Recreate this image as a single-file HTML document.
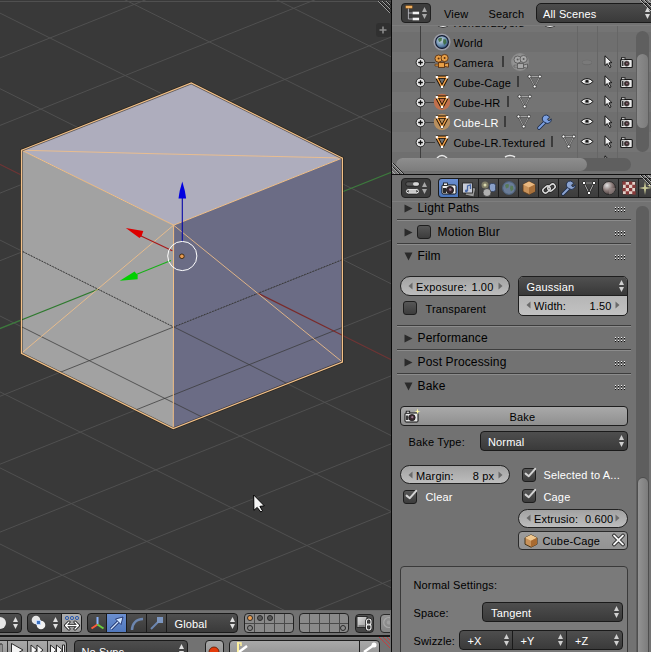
<!DOCTYPE html>
<html><head><meta charset="utf-8">
<style>
*{box-sizing:border-box}
html,body{margin:0;padding:0}
body{width:651px;height:652px;overflow:hidden;position:relative;background:#727272;font-family:"Liberation Sans",sans-serif;font-size:11px;color:#000}
.a{position:absolute}
.t{position:absolute;white-space:nowrap;line-height:1;letter-spacing:0.15px}
.menu{position:absolute;border:1px solid #1a1a1a;border-radius:4px;background:linear-gradient(#4e4e4e,#3a3a3a);color:#fff}
.btn{position:absolute;border:1px solid #1e1e1e;border-radius:4px;background:linear-gradient(#a9a9a9,#8f8f8f)}
.num{position:absolute;border:1px solid #222;border-radius:10px;background:linear-gradient(#a2a2a2,#bdbdbd)}
.chk{position:absolute;width:14px;height:14px;border:1px solid #1e1e1e;border-radius:3px;background:linear-gradient(#575757,#3c3c3c)}
.sep{position:absolute;height:1px;background:#4f4f4f;box-shadow:0 1px 0 #7f7f7f}
.ph{position:absolute;font-size:12px;line-height:1;white-space:nowrap}
.tri{position:absolute;width:0;height:0}
</style></head><body>

<svg width="391" height="610" viewBox="0 0 391 610" style="position:absolute;left:0;top:0;display:block">
<defs>
<clipPath id="outcube"><path clip-rule="evenodd" d="M-5 -5H400V620H-5Z M21.5 150.2 191.3 83.0 342.4 158.0 342.5 259.5 173.7 326.9 22.9 251.6Z"/></clipPath>
<clipPath id="lowcube"><polygon points="22.9,251.6 173.7,326.9 342.5,259.5 342.4,362.0 173.3,428.6 21.4,353.3"/></clipPath>
</defs>
<rect x="0" y="0" width="391" height="610" fill="#393939"/>
<rect x="0" y="1" width="391" height="1" fill="#505050"/>
<g clip-path="url(#outcube)"><path d="M-2.0 543.0L135.6 612.0 M-2.0 466.9L287.7 612.0 M-2.0 390.9L393.0 588.6 M-2.0 315.0L393.0 512.5 M-2.0 239.1L393.0 436.5 M-2.0 87.7L393.0 284.7 M-2.0 12.1L393.0 209.0 M121.3 -2.0L393.0 133.3 M273.0 -2.0L393.0 57.7 M-2.0 58.7L150.2 -2.0 M-2.0 126.2L319.5 -2.0 M-2.0 193.9L393.0 36.3 M-2.0 261.5L393.0 103.9 M-2.0 397.1L393.0 239.4 M-2.0 465.0L393.0 307.2 M-2.0 532.9L393.0 375.1 M-2.0 600.9L393.0 443.1 M140.5 612.0L393.0 511.1 M311.0 612.0L393.0 579.2" stroke="#505050" stroke-width="1" fill="none"/>
<path d="M-2.0 163.4L393.0 360.6" stroke="#6e3535" stroke-width="1.2" fill="none"/>
<path d="M-2.0 329.3L393.0 171.6" stroke="#3d7a3d" stroke-width="1.2" fill="none"/></g>
<polygon points="21.5,150.2 191.3,83.0 342.4,158.0 173.6,225.2" fill="#aeadbd"/>
<polygon points="21.5,150.2 173.6,225.2 173.3,428.6 21.4,353.3" fill="#a2a2a2"/>
<polygon points="173.6,225.2 342.4,158.0 342.4,362.0 173.3,428.6" fill="#6b6c85"/>
<g clip-path="url(#lowcube)"><path d="M-2.0 543.0L135.6 612.0 M-2.0 466.9L287.7 612.0 M-2.0 390.9L393.0 588.6 M-2.0 315.0L393.0 512.5 M-2.0 239.1L393.0 436.5 M-2.0 87.7L393.0 284.7 M-2.0 12.1L393.0 209.0 M121.3 -2.0L393.0 133.3 M273.0 -2.0L393.0 57.7 M-2.0 58.7L150.2 -2.0 M-2.0 126.2L319.5 -2.0 M-2.0 193.9L393.0 36.3 M-2.0 261.5L393.0 103.9 M-2.0 397.1L393.0 239.4 M-2.0 465.0L393.0 307.2 M-2.0 532.9L393.0 375.1 M-2.0 600.9L393.0 443.1 M140.5 612.0L393.0 511.1 M311.0 612.0L393.0 579.2" stroke="#3a3a3a" stroke-opacity="0.75" stroke-width="1" fill="none"/>
<path d="M-2.0 163.4L393.0 360.6" stroke="#7a2a2a" stroke-width="1.2" fill="none"/>
<path d="M-2.0 329.3L393.0 171.6" stroke="#2f7a2f" stroke-width="1.2" fill="none"/></g>
<polyline points="22.9,251.6 173.7,326.9 342.5,259.5" stroke="#3a3a3a" stroke-width="1" stroke-dasharray="1.5 1.5" fill="none"/>
<g stroke="#f2c088" stroke-width="1" fill="none" stroke-linejoin="round">
<polyline points="21.5,150.2 150.0,153.6 342.4,158.0" stroke-opacity="0.85"/>
<polyline points="21.4,353.3 173.6,225.2 342.4,362.0" stroke-opacity="0.85"/>
<polyline points="21.5,150.2 173.6,225.2 342.4,158.0"/>
<polyline points="173.6,225.2 173.3,428.6"/>
</g>
<polygon points="21.5,150.2 191.3,83.0 342.4,158.0 342.4,362.0 173.3,428.6 21.4,353.3" stroke="#1a1208" stroke-width="2.6" fill="none" stroke-opacity="0.55" stroke-linejoin="miter"/>
<polygon points="21.5,150.2 191.3,83.0 342.4,158.0 342.4,362.0 173.3,428.6 21.4,353.3" stroke="#f2c088" stroke-width="1.2" fill="none" stroke-linejoin="miter"/>
<line x1="182.3" y1="241.5" x2="182.3" y2="197" stroke="#0808a8" stroke-width="1.1"/>
<polygon points="182.3,181.5 179.70000000000002,191 178.5,198.5 186.10000000000002,198.5 184.9,191" fill="#0000e0"/>
<line x1="172.3" y1="250.8" x2="140" y2="235.6" stroke="#a81818" stroke-width="1.1"/>
<polygon points="125.8,228.1 143.3,231.0 141.6,236.0 139.5,238.1" fill="#dd0000"/>
<line x1="170.9" y1="260.5" x2="135" y2="275" stroke="#18b018" stroke-width="1.1"/>
<polygon points="119.8,280.8 134.6,271.6 137.6,275.2 137.6,279.2" fill="#00d000"/>
<circle cx="182.3" cy="256.0" r="14.6" stroke="#ffffff" stroke-width="1" fill="none"/>
<circle cx="181.9" cy="256.3" r="2.3" fill="#e89a50" stroke="#3a2408" stroke-width="0.9"/>
<g stroke="#a0a0a0" stroke-width="1"><line x1="378" y1="1" x2="390" y2="13"/><line x1="382" y1="1" x2="390" y2="9"/><line x1="386" y1="1" x2="390" y2="5"/></g>
<g stroke="#1c1c1c" stroke-width="1"><line x1="379" y1="1" x2="391" y2="13"/><line x1="383" y1="1" x2="391" y2="9"/><line x1="387" y1="1" x2="391" y2="5"/></g>
<rect x="376" y="23" width="15" height="14" rx="3" fill="#2e2e2e" fill-opacity="0.8"/>
<path d="M383 26.5v7M379.5 30h7" stroke="#8a8a8a" stroke-width="1.6"/>
<path d="M253.7 495 L253.9 510.3 L257.2 507.4 L260.8 512 L262.6 510.9 L259.9 506.4 L264.3 505.8 Z" fill="#f4f4f4" stroke="#000" stroke-width="1"/>
</svg>
<div class="a" style="left:391px;top:0;width:1px;height:652px;background:#0a0a0a"></div>
<div class="a" style="left:392px;top:0;width:259px;height:174px;background:#727272;overflow:hidden">
<div class="a" style="left:0;top:12px;width:259px;height:20px;background:#747474"></div>
<div class="a" style="left:0;top:32px;width:259px;height:20px;background:#6f6f6f"></div>
<div class="a" style="left:0;top:52px;width:259px;height:20px;background:#747474"></div>
<div class="a" style="left:0;top:72px;width:259px;height:20px;background:#6f6f6f"></div>
<div class="a" style="left:0;top:92px;width:259px;height:20px;background:#747474"></div>
<div class="a" style="left:0;top:112px;width:259px;height:20px;background:#6f6f6f"></div>
<div class="a" style="left:0;top:132px;width:259px;height:20px;background:#747474"></div>
<div class="a" style="left:0;top:152px;width:259px;height:20px;background:#6f6f6f"></div>
<div class="a" style="left:184.5px;top:25px;width:1px;height:135px;background:#666"></div>
<div class="a" style="left:204.5px;top:25px;width:1px;height:135px;background:#666"></div>
<div class="a" style="left:224.5px;top:25px;width:1px;height:135px;background:#666"></div>
<div class="a" style="left:27.5px;top:25px;width:1px;height:133px;background:#3e3e3e"></div>
<div class="t" style="left:61.5px;top:17.69px;font-size:11px;color:#000;">RenderLayers</div>
<div class="t" style="left:61.5px;top:37.69px;font-size:11px;color:#000;">World</div>
<svg class="a" style="left:22.5px;top:56.5px;overflow:visible" width="11" height="11" viewBox="0 0 11 11"><circle cx="5.5" cy="5.5" r="4.4" fill="#e6e6e6" stroke="#262626" stroke-width="1"/><path d="M3.2 5.5h4.6M5.5 3.2v4.6" stroke="#111" stroke-width="1.3"/></svg>
<div class="a" style="left:33px;top:62px;width:10px;height:1px;background:#3e3e3e"></div>
<div class="t" style="left:61.5px;top:57.69px;font-size:11px;color:#000;">Camera</div>
<div class="a" style="left:110.2px;top:56px;width:2px;height:11px;background:#3c3c3c"></div>
<svg class="a" style="left:22.5px;top:76.5px;overflow:visible" width="11" height="11" viewBox="0 0 11 11"><circle cx="5.5" cy="5.5" r="4.4" fill="#e6e6e6" stroke="#262626" stroke-width="1"/><path d="M3.2 5.5h4.6M5.5 3.2v4.6" stroke="#111" stroke-width="1.3"/></svg>
<div class="a" style="left:33px;top:82px;width:10px;height:1px;background:#3e3e3e"></div>
<div class="t" style="left:61.5px;top:77.69px;font-size:11px;color:#000;">Cube-Cage</div>
<div class="a" style="left:124.7px;top:76px;width:2px;height:11px;background:#3c3c3c"></div>
<svg class="a" style="left:22.5px;top:96.5px;overflow:visible" width="11" height="11" viewBox="0 0 11 11"><circle cx="5.5" cy="5.5" r="4.4" fill="#e6e6e6" stroke="#262626" stroke-width="1"/><path d="M3.2 5.5h4.6M5.5 3.2v4.6" stroke="#111" stroke-width="1.3"/></svg>
<div class="a" style="left:33px;top:102px;width:10px;height:1px;background:#3e3e3e"></div>
<div class="t" style="left:61.5px;top:97.69px;font-size:11px;color:#000;">Cube-HR</div>
<div class="a" style="left:114.6px;top:96px;width:2px;height:11px;background:#3c3c3c"></div>
<svg class="a" style="left:22.5px;top:116.5px;overflow:visible" width="11" height="11" viewBox="0 0 11 11"><circle cx="5.5" cy="5.5" r="4.4" fill="#e6e6e6" stroke="#262626" stroke-width="1"/><path d="M3.2 5.5h4.6M5.5 3.2v4.6" stroke="#111" stroke-width="1.3"/></svg>
<div class="a" style="left:33px;top:122px;width:10px;height:1px;background:#3e3e3e"></div>
<div class="t" style="left:61.5px;top:117.69px;font-size:11px;color:#fff;">Cube-LR</div>
<div class="a" style="left:112.4px;top:116px;width:2px;height:11px;background:#3c3c3c"></div>
<svg class="a" style="left:22.5px;top:136.5px;overflow:visible" width="11" height="11" viewBox="0 0 11 11"><circle cx="5.5" cy="5.5" r="4.4" fill="#e6e6e6" stroke="#262626" stroke-width="1"/><path d="M3.2 5.5h4.6M5.5 3.2v4.6" stroke="#111" stroke-width="1.3"/></svg>
<div class="a" style="left:33px;top:142px;width:10px;height:1px;background:#3e3e3e"></div>
<div class="t" style="left:61.5px;top:137.69px;font-size:11px;color:#000;">Cube-LR.Textured</div>
<div class="a" style="left:158.7px;top:136px;width:2px;height:11px;background:#3c3c3c"></div>
<svg class="a" style="left:44px;top:20px;overflow:visible" width="14" height="10" viewBox="0 0 14 10"><path d="M1 4 Q7 9 13 4" stroke="#222" stroke-width="2.6" fill="none"/><path d="M1 4 Q7 9 13 4" stroke="#f0f0f0" stroke-width="1.2" fill="none"/></svg>
<svg class="a" style="left:151px;top:20px;overflow:visible" width="14" height="10" viewBox="0 0 14 10"><path d="M1 4 Q7 9 13 4" stroke="#222" stroke-width="2.6" fill="none"/><path d="M1 4 Q7 9 13 4" stroke="#f0f0f0" stroke-width="1.2" fill="none"/></svg>
<svg class="a" style="left:44px;top:152px;overflow:visible" width="12" height="8" viewBox="0 0 12 8"><path d="M1 6 Q6 1 11 6" stroke="#e8e8e8" stroke-width="1.5" fill="none"/></svg>
<svg class="a" style="left:112px;top:152px;overflow:visible" width="12" height="8" viewBox="0 0 12 8"><path d="M1 5 Q6 2 11 5" stroke="#e8e8e8" stroke-width="1.5" fill="none"/></svg>
<svg class="a" style="left:41px;top:32.7px;overflow:visible" width="18" height="18" viewBox="0 0 18 18"><circle cx="9" cy="9" r="8.6" fill="#a9aab6" opacity="0.8"/><defs><radialGradient id="gg" cx="0.4" cy="0.35" r="0.7"><stop offset="0" stop-color="#d0dce4"/><stop offset="0.6" stop-color="#6a8eb0"/><stop offset="1" stop-color="#2e4a70"/></radialGradient></defs><circle cx="9" cy="9" r="6.4" fill="url(#gg)" stroke="#10182e" stroke-width="1.1"/><path d="M5 6 Q7 4 9 5 L8.5 8 L6 9 Z M10.5 6 L13 6.5 L13.5 10 L11 12 L10 9Z" fill="#3a6a3a" opacity="0.85"/></svg>
<svg class="a" style="left:42.2px;top:54.3px;overflow:visible" width="16" height="15" viewBox="0 0 16 15"><circle cx="4.6" cy="4.6" r="3.6" fill="#e8a048" stroke="#5a3010" stroke-width="0.9"/><circle cx="4.6" cy="4.6" r="1" fill="#5a3010"/><circle cx="10.6" cy="4" r="3.6" fill="#e8a048" stroke="#5a3010" stroke-width="0.9"/><circle cx="10.6" cy="4" r="1" fill="#5a3010"/><rect x="4.5" y="8.6" width="6" height="4.8" fill="#e8a048" stroke="#5a3010" stroke-width="0.9"/><path d="M1 10.2 L4.5 10.2 L4.5 12 L1 12Z" fill="#e8a048" stroke="#5a3010" stroke-width="0.7"/><path d="M10.5 10 L14.5 9 L14.5 13.2 L10.5 12.4Z" fill="#e8a048" stroke="#5a3010" stroke-width="0.9"/></svg>
<svg class="a" style="left:42.2px;top:74.2px;overflow:visible" width="16" height="16" viewBox="0 0 16 16"><polygon points="2.7,3.2 13.3,3.2 8,13" fill="none" stroke="#1a0e00" stroke-width="3.2" stroke-linejoin="round"/><polygon points="2.7,3.2 13.3,3.2 8,13" fill="none" stroke="#f0a04a" stroke-width="1.5" stroke-linejoin="round"/><rect x="1.5000000000000002" y="2.0" width="2.4" height="2.4" fill="#fff"/><rect x="12.100000000000001" y="2.0" width="2.4" height="2.4" fill="#fff"/><rect x="6.8" y="11.8" width="2.4" height="2.4" fill="#fff"/></svg>
<svg class="a" style="left:42.2px;top:94.2px;overflow:visible" width="16" height="16" viewBox="0 0 16 16"><circle cx="8" cy="8" r="8.2" fill="#c0704c"/><polygon points="2.7,3.2 13.3,3.2 8,13" fill="none" stroke="#1a0e00" stroke-width="3.2" stroke-linejoin="round"/><polygon points="2.7,3.2 13.3,3.2 8,13" fill="none" stroke="#f0a04a" stroke-width="1.5" stroke-linejoin="round"/><rect x="1.5000000000000002" y="2.0" width="2.4" height="2.4" fill="#fff"/><rect x="12.100000000000001" y="2.0" width="2.4" height="2.4" fill="#fff"/><rect x="6.8" y="11.8" width="2.4" height="2.4" fill="#fff"/></svg>
<svg class="a" style="left:42.2px;top:114.2px;overflow:visible" width="16" height="16" viewBox="0 0 16 16"><circle cx="8" cy="8" r="8.2" fill="#b88f5e"/><polygon points="2.7,3.2 13.3,3.2 8,13" fill="none" stroke="#1a0e00" stroke-width="3.2" stroke-linejoin="round"/><polygon points="2.7,3.2 13.3,3.2 8,13" fill="none" stroke="#f0a04a" stroke-width="1.5" stroke-linejoin="round"/><rect x="1.5000000000000002" y="2.0" width="2.4" height="2.4" fill="#fff"/><rect x="12.100000000000001" y="2.0" width="2.4" height="2.4" fill="#fff"/><rect x="6.8" y="11.8" width="2.4" height="2.4" fill="#fff"/></svg>
<svg class="a" style="left:42.2px;top:134.2px;overflow:visible" width="16" height="16" viewBox="0 0 16 16"><polygon points="2.7,3.2 13.3,3.2 8,13" fill="none" stroke="#1a0e00" stroke-width="3.2" stroke-linejoin="round"/><polygon points="2.7,3.2 13.3,3.2 8,13" fill="none" stroke="#f0a04a" stroke-width="1.5" stroke-linejoin="round"/><rect x="1.5000000000000002" y="2.0" width="2.4" height="2.4" fill="#fff"/><rect x="12.100000000000001" y="2.0" width="2.4" height="2.4" fill="#fff"/><rect x="6.8" y="11.8" width="2.4" height="2.4" fill="#fff"/></svg>
<svg class="a" style="left:119px;top:52.5px;overflow:visible" width="18" height="18" viewBox="0 0 18 18"><circle cx="9" cy="9" r="9" fill="#8c8c8c"/><circle cx="9" cy="9" r="7.5" fill="#939393"/></svg>
<svg class="a" style="left:120.5px;top:54.5px;overflow:visible" width="16" height="15" viewBox="0 0 16 15"><circle cx="4.6" cy="4.6" r="3.6" fill="#a8a8a8" stroke="#5a5a5a" stroke-width="0.9"/><circle cx="4.6" cy="4.6" r="1" fill="#5a5a5a"/><circle cx="10.6" cy="4" r="3.6" fill="#a8a8a8" stroke="#5a5a5a" stroke-width="0.9"/><circle cx="10.6" cy="4" r="1" fill="#5a5a5a"/><rect x="4.5" y="8.6" width="6" height="4.8" fill="#a8a8a8" stroke="#5a5a5a" stroke-width="0.9"/><path d="M1 10.2 L4.5 10.2 L4.5 12 L1 12Z" fill="#a8a8a8" stroke="#5a5a5a" stroke-width="0.7"/><path d="M10.5 10 L14.5 9 L14.5 13.2 L10.5 12.4Z" fill="#a8a8a8" stroke="#5a5a5a" stroke-width="0.9"/></svg>
<svg class="a" style="left:135.9px;top:75.2px;overflow:visible" width="14" height="14" viewBox="0 0 14 14"><polygon points="1.5,1.5 11.9,1.5 6.7,11.5" fill="none" stroke="#3a3a3a" stroke-width="1.6"/><polygon points="1.5,1.5 11.9,1.5 6.7,11.5" fill="none" stroke="#e8e8e8" stroke-width="0.6"/><circle cx="1.5" cy="1.5" r="1.5" fill="#fff" stroke="#222" stroke-width="0.7"/><circle cx="11.9" cy="1.5" r="1.5" fill="#fff" stroke="#222" stroke-width="0.7"/><circle cx="6.7" cy="11.5" r="1.5" fill="#fff" stroke="#222" stroke-width="0.7"/></svg>
<svg class="a" style="left:126.1px;top:95.3px;overflow:visible" width="14" height="14" viewBox="0 0 14 14"><polygon points="1.5,1.5 11.9,1.5 6.7,11.5" fill="none" stroke="#3a3a3a" stroke-width="1.6"/><polygon points="1.5,1.5 11.9,1.5 6.7,11.5" fill="none" stroke="#e8e8e8" stroke-width="0.6"/><circle cx="1.5" cy="1.5" r="1.5" fill="#fff" stroke="#222" stroke-width="0.7"/><circle cx="11.9" cy="1.5" r="1.5" fill="#fff" stroke="#222" stroke-width="0.7"/><circle cx="6.7" cy="11.5" r="1.5" fill="#fff" stroke="#222" stroke-width="0.7"/></svg>
<svg class="a" style="left:124.6px;top:115.3px;overflow:visible" width="14" height="14" viewBox="0 0 14 14"><polygon points="1.5,1.5 11.9,1.5 6.7,11.5" fill="none" stroke="#3a3a3a" stroke-width="1.6"/><polygon points="1.5,1.5 11.9,1.5 6.7,11.5" fill="none" stroke="#e8e8e8" stroke-width="0.6"/><circle cx="1.5" cy="1.5" r="1.5" fill="#fff" stroke="#222" stroke-width="0.7"/><circle cx="11.9" cy="1.5" r="1.5" fill="#fff" stroke="#222" stroke-width="0.7"/><circle cx="6.7" cy="11.5" r="1.5" fill="#fff" stroke="#222" stroke-width="0.7"/></svg>
<svg class="a" style="left:169.7px;top:135.3px;overflow:visible" width="14" height="14" viewBox="0 0 14 14"><polygon points="1.5,1.5 11.9,1.5 6.7,11.5" fill="none" stroke="#3a3a3a" stroke-width="1.6"/><polygon points="1.5,1.5 11.9,1.5 6.7,11.5" fill="none" stroke="#e8e8e8" stroke-width="0.6"/><circle cx="1.5" cy="1.5" r="1.5" fill="#fff" stroke="#222" stroke-width="0.7"/><circle cx="11.9" cy="1.5" r="1.5" fill="#fff" stroke="#222" stroke-width="0.7"/><circle cx="6.7" cy="11.5" r="1.5" fill="#fff" stroke="#222" stroke-width="0.7"/></svg>
<svg class="a" style="left:144.5px;top:114.5px;overflow:visible" width="15" height="15" viewBox="0 0 15 15"><path d="M2 13 L8.5 6.5" stroke="#1a2a4a" stroke-width="3.6" stroke-linecap="round"/><path d="M2 13 L8.5 6.5" stroke="#7ca0e0" stroke-width="2" stroke-linecap="round"/><path d="M8 7.5 A3.8 3.8 0 1 1 12.5 2.2 L10.6 4.2 L11.2 5.4 L12.4 5.8 L14.2 3.8 A3.8 3.8 0 0 1 8 7.5Z" fill="#7ca0e0" stroke="#1a2a4a" stroke-width="0.9"/></svg>
<svg class="a" style="left:188px;top:78.0px;overflow:visible" width="14" height="7" viewBox="0 0 14 7"><path d="M0.8 3.5 Q7 -2.5 13.2 3.5 Q7 9.5 0.8 3.5Z" fill="#f2f2f2" stroke="#1a1a1a" stroke-width="1"/><circle cx="7" cy="3.5" r="2.3" fill="#8a8a8a"/><circle cx="7" cy="3.2" r="1.2" fill="#111"/></svg>
<svg class="a" style="left:188px;top:98.0px;overflow:visible" width="14" height="7" viewBox="0 0 14 7"><path d="M0.8 3.5 Q7 -2.5 13.2 3.5 Q7 9.5 0.8 3.5Z" fill="#f2f2f2" stroke="#1a1a1a" stroke-width="1"/><circle cx="7" cy="3.5" r="2.3" fill="#8a8a8a"/><circle cx="7" cy="3.2" r="1.2" fill="#111"/></svg>
<svg class="a" style="left:188px;top:118.0px;overflow:visible" width="14" height="7" viewBox="0 0 14 7"><path d="M0.8 3.5 Q7 -2.5 13.2 3.5 Q7 9.5 0.8 3.5Z" fill="#f2f2f2" stroke="#1a1a1a" stroke-width="1"/><circle cx="7" cy="3.5" r="2.3" fill="#8a8a8a"/><circle cx="7" cy="3.2" r="1.2" fill="#111"/></svg>
<svg class="a" style="left:188px;top:138.0px;overflow:visible" width="14" height="7" viewBox="0 0 14 7"><path d="M0.8 3.5 Q7 -2.5 13.2 3.5 Q7 9.5 0.8 3.5Z" fill="#f2f2f2" stroke="#1a1a1a" stroke-width="1"/><circle cx="7" cy="3.5" r="2.3" fill="#8a8a8a"/><circle cx="7" cy="3.2" r="1.2" fill="#111"/></svg>
<svg class="a" style="left:188px;top:58px;overflow:visible" width="14" height="8" viewBox="0 0 14 8"><ellipse cx="7" cy="4.5" rx="5" ry="2.8" fill="#6a6a6a"/><ellipse cx="7" cy="4.2" rx="4.5" ry="2" fill="#7a7a7a"/></svg>
<svg class="a" style="left:211.5px;top:55.2px;overflow:visible" width="9" height="13" viewBox="0 0 9 13"><path d="M1 0.8 L1 10.5 L3.3 8.6 L5.6 12.6 L7 11.8 L4.9 7.9 L7.9 7.6 Z" fill="#f0f0f0" stroke="#111" stroke-width="1" stroke-linejoin="round"/></svg>
<svg class="a" style="left:228px;top:56.7px;overflow:visible" width="13" height="11" viewBox="0 0 13 11"><rect x="0.7" y="2.5" width="11.6" height="8" rx="1" fill="#e8e8e8" stroke="#1a1a1a" stroke-width="1.2"/><rect x="1.5" y="0.7" width="3.5" height="2" fill="#e8e8e8" stroke="#1a1a1a" stroke-width="0.9"/><circle cx="6.7" cy="6.6" r="2.6" fill="#3a2a2a" stroke="#555" stroke-width="0.6"/><circle cx="6.9" cy="6.4" r="0.9" fill="#8a6a7a"/><rect x="2" y="4" width="1.5" height="5" fill="#3a3a3a"/></svg>
<svg class="a" style="left:211.5px;top:75.2px;overflow:visible" width="9" height="13" viewBox="0 0 9 13"><path d="M1 0.8 L1 10.5 L3.3 8.6 L5.6 12.6 L7 11.8 L4.9 7.9 L7.9 7.6 Z" fill="#f0f0f0" stroke="#111" stroke-width="1" stroke-linejoin="round"/></svg>
<svg class="a" style="left:228px;top:76.7px;overflow:visible" width="13" height="11" viewBox="0 0 13 11"><rect x="0.7" y="2.5" width="11.6" height="8" rx="1" fill="#e8e8e8" stroke="#1a1a1a" stroke-width="1.2"/><rect x="1.5" y="0.7" width="3.5" height="2" fill="#e8e8e8" stroke="#1a1a1a" stroke-width="0.9"/><circle cx="6.7" cy="6.6" r="2.6" fill="#3a2a2a" stroke="#555" stroke-width="0.6"/><circle cx="6.9" cy="6.4" r="0.9" fill="#8a6a7a"/><rect x="2" y="4" width="1.5" height="5" fill="#3a3a3a"/></svg>
<svg class="a" style="left:211.5px;top:95.2px;overflow:visible" width="9" height="13" viewBox="0 0 9 13"><path d="M1 0.8 L1 10.5 L3.3 8.6 L5.6 12.6 L7 11.8 L4.9 7.9 L7.9 7.6 Z" fill="#f0f0f0" stroke="#111" stroke-width="1" stroke-linejoin="round"/></svg>
<svg class="a" style="left:228px;top:96.7px;overflow:visible" width="13" height="11" viewBox="0 0 13 11"><rect x="0.7" y="2.5" width="11.6" height="8" rx="1" fill="#e8e8e8" stroke="#1a1a1a" stroke-width="1.2"/><rect x="1.5" y="0.7" width="3.5" height="2" fill="#e8e8e8" stroke="#1a1a1a" stroke-width="0.9"/><circle cx="6.7" cy="6.6" r="2.6" fill="#3a2a2a" stroke="#555" stroke-width="0.6"/><circle cx="6.9" cy="6.4" r="0.9" fill="#8a6a7a"/><rect x="2" y="4" width="1.5" height="5" fill="#3a3a3a"/></svg>
<svg class="a" style="left:211.5px;top:115.2px;overflow:visible" width="9" height="13" viewBox="0 0 9 13"><path d="M1 0.8 L1 10.5 L3.3 8.6 L5.6 12.6 L7 11.8 L4.9 7.9 L7.9 7.6 Z" fill="#f0f0f0" stroke="#111" stroke-width="1" stroke-linejoin="round"/></svg>
<svg class="a" style="left:228px;top:116.7px;overflow:visible" width="13" height="11" viewBox="0 0 13 11"><rect x="0.7" y="2.5" width="11.6" height="8" rx="1" fill="#e8e8e8" stroke="#1a1a1a" stroke-width="1.2"/><rect x="1.5" y="0.7" width="3.5" height="2" fill="#e8e8e8" stroke="#1a1a1a" stroke-width="0.9"/><circle cx="6.7" cy="6.6" r="2.6" fill="#3a2a2a" stroke="#555" stroke-width="0.6"/><circle cx="6.9" cy="6.4" r="0.9" fill="#8a6a7a"/><rect x="2" y="4" width="1.5" height="5" fill="#3a3a3a"/></svg>
<svg class="a" style="left:211.5px;top:135.2px;overflow:visible" width="9" height="13" viewBox="0 0 9 13"><path d="M1 0.8 L1 10.5 L3.3 8.6 L5.6 12.6 L7 11.8 L4.9 7.9 L7.9 7.6 Z" fill="#f0f0f0" stroke="#111" stroke-width="1" stroke-linejoin="round"/></svg>
<svg class="a" style="left:228px;top:136.7px;overflow:visible" width="13" height="11" viewBox="0 0 13 11"><rect x="0.7" y="2.5" width="11.6" height="8" rx="1" fill="#e8e8e8" stroke="#1a1a1a" stroke-width="1.2"/><rect x="1.5" y="0.7" width="3.5" height="2" fill="#e8e8e8" stroke="#1a1a1a" stroke-width="0.9"/><circle cx="6.7" cy="6.6" r="2.6" fill="#3a2a2a" stroke="#555" stroke-width="0.6"/><circle cx="6.9" cy="6.4" r="0.9" fill="#8a6a7a"/><rect x="2" y="4" width="1.5" height="5" fill="#3a3a3a"/></svg>
<svg class="a" style="left:211.5px;top:155px;overflow:visible" width="9" height="13" viewBox="0 0 9 13"><path d="M1 0.8 L1 10.5 L3.3 8.6 L5.6 12.6 L7 11.8 L4.9 7.9 L7.9 7.6 Z" fill="#f0f0f0" stroke="#111" stroke-width="1" stroke-linejoin="round"/></svg>
<div class="a" style="left:244px;top:31px;width:13px;height:121px;border-radius:6.5px;background:#5f5f5f"></div>
<div class="a" style="left:245px;top:54px;width:11px;height:74px;border-radius:5.5px;background:linear-gradient(90deg,#8c8c8c,#7c7c7c)"></div>
<div class="a" style="left:4px;top:157.5px;width:235px;height:13px;border-radius:6.5px;background:#5f5f5f"></div>
<div class="a" style="left:4px;top:157.5px;width:191px;height:13px;border-radius:6.5px;background:linear-gradient(#8e8e8e,#7c7c7c)"></div>
<svg class="a" style="left:0px;top:162px;overflow:visible" width="13" height="12" viewBox="0 0 13 12"><g stroke="#a8a8a8" stroke-width="1"><line x1="0" y1="1" x2="11" y2="12"/><line x1="0" y1="5" x2="7" y2="12"/><line x1="0" y1="9" x2="3" y2="12"/></g><g stroke="#222" stroke-width="1"><line x1="1" y1="1" x2="12" y2="12"/><line x1="1" y1="5" x2="8" y2="12"/></g></svg>
</div>
<div class="a" style="left:392px;top:0;width:259px;height:25px;background:#727272"></div>
<div class="a" style="left:392px;top:25px;width:259px;height:1px;background:#7c7c7c"></div>
<div class="a" style="left:401px;top:3px;width:30px;height:20px;border-radius:4px;background:#3c3c3c;border:1px solid #202020"></div>
<svg class="a" style="left:405px;top:5px;overflow:visible" width="22" height="16" viewBox="0 0 22 16"><rect x="0.5" y="0.5" width="7" height="3" rx="1" fill="#f0b060" stroke="#6a4010" stroke-width="0.6"/><path d="M3.4 3.5V14" stroke="#c8c8d0" stroke-width="0.8"/><path d="M3.4 8h4M3.4 14h4" stroke="#c8c8d0" stroke-width="0.8"/><rect x="7.6" y="6.7" width="6.5" height="2.6" fill="#f4f4f4"/><rect x="7.6" y="12.7" width="6.5" height="2.6" fill="#f4f4f4"/></svg>
<svg class="a" style="left:422.0px;top:6.800000000000001px;overflow:visible" width="5" height="12" viewBox="0 0 5 12"><polygon points="2.5,0 5,5 0,5" fill="#a8a8a8"/><polygon points="0,7 5,7 2.5,12" fill="#a8a8a8"/></svg>
<div class="t" style="left:444px;top:8.69px;font-size:11px;color:#000;">View</div>
<div class="t" style="left:488.5px;top:8.69px;font-size:11px;color:#000;">Search</div>
<div class="a" style="left:536px;top:3px;width:125px;height:20px;border:1px solid #1a1a1a;border-radius:5px;background:linear-gradient(#4c4c4c,#3a3a3a)"></div>
<div class="t" style="left:543px;top:8.69px;font-size:11px;color:#fff;">All Scenes</div>
<svg class="a" style="left:645.0px;top:6.800000000000001px;overflow:visible" width="5" height="12" viewBox="0 0 5 12"><polygon points="2.5,0 5,5 0,5" fill="#d8d8d8"/><polygon points="0,7 5,7 2.5,12" fill="#d8d8d8"/></svg>
<svg class="a" style="left:639px;top:0px;overflow:visible" width="12" height="12" viewBox="0 0 12 12"><g stroke="#b0b0b0" stroke-width="1"><line x1="1" y1="0" x2="12" y2="11"/><line x1="5" y1="0" x2="12" y2="7"/><line x1="9" y1="0" x2="12" y2="3"/></g><g stroke="#1a1a1a" stroke-width="1"><line x1="2" y1="0" x2="12" y2="10"/><line x1="6" y1="0" x2="12" y2="6"/></g></svg>
<div class="a" style="left:392px;top:173.5px;width:259px;height:2px;background:#0e0e0e"></div>
<div class="a" style="left:392px;top:175px;width:259px;height:26px;background:#727272"></div><div class="a" style="left:392px;top:201px;width:259px;height:1px;background:#7e7e7e"></div>
<div class="a" style="left:401px;top:178px;width:30px;height:20px;border-radius:4px;background:#3c3c3c;border:1px solid #202020"></div>
<svg class="a" style="left:405px;top:181px;overflow:visible" width="16" height="14" viewBox="0 0 16 14"><rect x="0.7" y="0.8" width="13.6" height="4.4" rx="2.2" fill="#5a5a5a" stroke="#1a1a1a" stroke-width="0.8"/><rect x="8" y="1.2" width="6" height="3.6" rx="1.8" fill="#d8d8d8"/><rect x="0.7" y="7.6" width="13.6" height="5.4" rx="2.7" fill="#f4f4f4" stroke="#1a1a1a" stroke-width="0.8"/><rect x="4" y="8.8" width="7" height="3" fill="#c8c8c8"/><polygon points="1.8,10.3 3.6,8.8 3.6,11.8" fill="#111"/><polygon points="13.2,10.3 11.4,8.8 11.4,11.8" fill="#111"/></svg>
<svg class="a" style="left:422.0px;top:181.8px;overflow:visible" width="5" height="12" viewBox="0 0 5 12"><polygon points="2.5,0 5,5 0,5" fill="#a8a8a8"/><polygon points="0,7 5,7 2.5,12" fill="#a8a8a8"/></svg>
<div class="a" style="left:438px;top:178px;width:220px;height:20px;border-radius:4px 0 0 4px;background:#1c1c1c"></div>
<div class="a" style="left:439px;top:179px;width:19px;height:18px;background:linear-gradient(#6b8fd0,#4a74b8);border-radius:3px 0 0 3px;"></div>
<div class="a" style="left:459px;top:179px;width:19px;height:18px;background:linear-gradient(#4c4c4c,#3c3c3c);"></div>
<div class="a" style="left:479px;top:179px;width:19px;height:18px;background:linear-gradient(#4c4c4c,#3c3c3c);"></div>
<div class="a" style="left:499px;top:179px;width:19px;height:18px;background:linear-gradient(#4c4c4c,#3c3c3c);"></div>
<div class="a" style="left:519px;top:179px;width:19px;height:18px;background:linear-gradient(#4c4c4c,#3c3c3c);"></div>
<div class="a" style="left:539px;top:179px;width:19px;height:18px;background:linear-gradient(#4c4c4c,#3c3c3c);"></div>
<div class="a" style="left:559px;top:179px;width:19px;height:18px;background:linear-gradient(#4c4c4c,#3c3c3c);"></div>
<div class="a" style="left:579px;top:179px;width:19px;height:18px;background:linear-gradient(#4c4c4c,#3c3c3c);"></div>
<div class="a" style="left:599px;top:179px;width:19px;height:18px;background:linear-gradient(#4c4c4c,#3c3c3c);"></div>
<div class="a" style="left:619px;top:179px;width:19px;height:18px;background:linear-gradient(#4c4c4c,#3c3c3c);"></div>
<div class="a" style="left:639px;top:179px;width:19px;height:18px;background:linear-gradient(#4c4c4c,#3c3c3c);"></div>
<svg class="a" style="left:440.5px;top:180.5px;overflow:visible" width="16" height="15" viewBox="0 0 16 15"><rect x="1" y="4" width="14" height="9" rx="1.2" fill="#f0f0f0" stroke="#111" stroke-width="1"/><rect x="2.5" y="2" width="4" height="2.5" fill="#f0f0f0" stroke="#111" stroke-width="0.8"/><circle cx="9" cy="9" r="3.6" fill="#3a2830" stroke="#111" stroke-width="0.8"/><circle cx="9.3" cy="8.6" r="1.3" fill="#a07a90"/><rect x="2" y="7" width="3" height="5" fill="#2a2a2a"/></svg><svg class="a" style="left:461px;top:180.5px;overflow:visible" width="16" height="16" viewBox="0 0 16 16"><rect x="5" y="6" width="9" height="9" fill="#9a9a9a" stroke="#2a2a2a" stroke-width="0.8" transform="rotate(12 9 10)"/><rect x="1.5" y="2" width="10" height="10" fill="#c8ccd8" stroke="#2a2a2a" stroke-width="0.9"/><path d="M6.5 10V5l3-1v4" stroke="#4a6aa8" stroke-width="1.3" fill="none"/><circle cx="5.3" cy="10" r="1.4" fill="#4a6aa8"/></svg><svg class="a" style="left:481px;top:180.5px;overflow:visible" width="16" height="16" viewBox="0 0 16 16"><circle cx="4" cy="4" r="3.5" fill="#e8e0a0" opacity="0.35"/><circle cx="4" cy="4" r="1.5" fill="#f0f0c0" opacity="0.8"/><rect x="8.5" y="2.5" width="6" height="8" rx="2" fill="#8aa0c8" stroke="#2a3a5a" stroke-width="0.7"/><circle cx="6" cy="11.5" r="4" fill="#b0b0b0" stroke="#3a3a3a" stroke-width="0.7"/></svg><svg class="a" style="left:500.5px;top:180px;overflow:visible" width="16" height="16" viewBox="0 0 16 16"><circle cx="8" cy="8" r="6.5" fill="#6a7c98" stroke="#1a2a40" stroke-width="1"/><path d="M4 5 Q6 3.5 8 4.5 L7.5 7.5 L5 8.5Z M9.5 5.5 L12 6 L12.5 9.5 L10 11.5 L9 8.5Z" fill="#587a5a"/><circle cx="8" cy="8" r="6.5" fill="none" stroke="#9ab0c8" stroke-width="0.7" opacity="0.6"/></svg><svg class="a" style="left:520.5px;top:180px;overflow:visible" width="16" height="16" viewBox="0 0 16 16"><polygon points="8,1.5 14,4.5 14,11.5 8,14.5 2,11.5 2,4.5" fill="#c8925a" stroke="#5a3a1a" stroke-width="0.8"/><polygon points="8,1.5 14,4.5 8,7.5 2,4.5" fill="#e8b880"/><polygon points="8,7.5 14,4.5 14,11.5 8,14.5" fill="#a8703a"/></svg><svg class="a" style="left:540.5px;top:180.5px;overflow:visible" width="16" height="16" viewBox="0 0 16 16"><g fill="none" stroke="#222" stroke-width="3"><rect x="1.5" y="6" width="8" height="5" rx="2.5" transform="rotate(-40 5.5 8.5)"/><rect x="6.5" y="4" width="8" height="5" rx="2.5" transform="rotate(-40 10.5 6.5)"/></g><g fill="none" stroke="#d8d8d8" stroke-width="1.5"><rect x="1.5" y="6" width="8" height="5" rx="2.5" transform="rotate(-40 5.5 8.5)"/><rect x="6.5" y="4" width="8" height="5" rx="2.5" transform="rotate(-40 10.5 6.5)"/></g></svg><svg class="a" style="left:561px;top:181px;overflow:visible" width="15" height="15" viewBox="0 0 15 15"><path d="M2 13 L8.5 6.5" stroke="#1a2a4a" stroke-width="3.6" stroke-linecap="round"/><path d="M2 13 L8.5 6.5" stroke="#8ca4d0" stroke-width="2" stroke-linecap="round"/><path d="M8 7.5 A3.8 3.8 0 1 1 12.5 2.2 L10.6 4.2 L11.2 5.4 L12.4 5.8 L14.2 3.8 A3.8 3.8 0 0 1 8 7.5Z" fill="#8ca4d0" stroke="#1a2a4a" stroke-width="0.9"/></svg><svg class="a" style="left:580.5px;top:180px;overflow:visible" width="16" height="16" viewBox="0 0 16 16"><polygon points="3,3 13,3 8,13" fill="none" stroke="#1a1a1a" stroke-width="2"/><polygon points="3,3 13,3 8,13" fill="none" stroke="#e0e0e0" stroke-width="0.8"/><circle cx="3" cy="3" r="1.7" fill="#fff" stroke="#111" stroke-width="0.8"/><circle cx="13" cy="3" r="1.7" fill="#fff" stroke="#111" stroke-width="0.8"/><circle cx="8" cy="13" r="1.7" fill="#fff" stroke="#111" stroke-width="0.8"/></svg><svg class="a" style="left:600.5px;top:180px;overflow:visible" width="16" height="16" viewBox="0 0 16 16"><defs><radialGradient id="mg" cx="0.35" cy="0.3" r="0.8"><stop offset="0" stop-color="#e0e0e0"/><stop offset="0.5" stop-color="#8a7a78"/><stop offset="1" stop-color="#3a3030"/></radialGradient></defs><circle cx="8" cy="8" r="6.5" fill="url(#mg)" stroke="#222" stroke-width="0.8"/><path d="M8 8 L14.5 8 A6.5 6.5 0 0 1 8 14.5Z" fill="#9a8a88" opacity="0.6"/></svg><svg class="a" style="left:620.5px;top:180px;overflow:visible" width="16" height="16" viewBox="0 0 16 16"><rect x="1.5" y="1.5" width="13" height="13" fill="#e0d0c8" stroke="#3a2a2a" stroke-width="0.8"/><rect x="1.5" y="1.5" width="3.25" height="3.25" fill="#8a3a3a"/><rect x="8.0" y="1.5" width="3.25" height="3.25" fill="#8a3a3a"/><rect x="4.75" y="4.75" width="3.25" height="3.25" fill="#8a3a3a"/><rect x="11.25" y="4.75" width="3.25" height="3.25" fill="#8a3a3a"/><rect x="1.5" y="8.0" width="3.25" height="3.25" fill="#8a3a3a"/><rect x="8.0" y="8.0" width="3.25" height="3.25" fill="#8a3a3a"/><rect x="4.75" y="11.25" width="3.25" height="3.25" fill="#8a3a3a"/><rect x="11.25" y="11.25" width="3.25" height="3.25" fill="#8a3a3a"/></svg><svg class="a" style="left:640px;top:180px;overflow:visible" width="12" height="16" viewBox="0 0 12 16"><path d="M5 1 L6 7 L11 8 L6 9 L5 15 L4 9 L-1 8 L4 7Z" fill="#d8d8a0" opacity="0.9"/><path d="M10 2 L10.5 5 L13 5.5 L10.5 6 L10 9 L9.5 6 L7 5.5 L9.5 5Z" fill="#e8e8b0"/></svg>
<svg class="a" style="left:639px;top:175px;overflow:visible" width="12" height="13" viewBox="0 0 12 13"><g stroke="#b0b0b0" stroke-width="1"><line x1="1" y1="0" x2="12" y2="11"/><line x1="5" y1="0" x2="12" y2="7"/><line x1="9" y1="0" x2="12" y2="3"/></g><g stroke="#1a1a1a" stroke-width="1"><line x1="2" y1="0" x2="12" y2="10"/><line x1="6" y1="0" x2="12" y2="6"/></g></svg>
<div class="a" style="left:397px;top:219px;width:234px;height:1px;background:#3d3d3d"></div>
<div class="a" style="left:397px;top:220px;width:234px;height:1px;background:#8c8c8c"></div>
<div class="a" style="left:397px;top:243px;width:234px;height:1px;background:#3d3d3d"></div>
<div class="a" style="left:397px;top:244px;width:234px;height:1px;background:#8c8c8c"></div>
<div class="a" style="left:397px;top:325px;width:234px;height:1px;background:#3d3d3d"></div>
<div class="a" style="left:397px;top:326px;width:234px;height:1px;background:#8c8c8c"></div>
<div class="a" style="left:397px;top:349px;width:234px;height:1px;background:#3d3d3d"></div>
<div class="a" style="left:397px;top:350px;width:234px;height:1px;background:#8c8c8c"></div>
<div class="a" style="left:397px;top:373px;width:234px;height:1px;background:#3d3d3d"></div>
<div class="a" style="left:397px;top:374px;width:234px;height:1px;background:#8c8c8c"></div>
<svg class="a" style="left:404px;top:204px" width="9" height="9"><polygon points="0.5,0.5 8.5,4.5 0.5,8.5" fill="#2a2a2a"/></svg>
<div class="t" style="left:417.5px;top:201.84px;font-size:12px;color:#000;">Light Paths</div>
<svg class="a" style="left:615px;top:207px" width="11" height="6"><rect x="0" y="0" width="1" height="1" fill="#f0f0f0"/><rect x="0" y="1" width="1" height="1" fill="#111"/><rect x="3" y="0" width="1" height="1" fill="#f0f0f0"/><rect x="3" y="1" width="1" height="1" fill="#111"/><rect x="6" y="0" width="1" height="1" fill="#f0f0f0"/><rect x="6" y="1" width="1" height="1" fill="#111"/><rect x="9" y="0" width="1" height="1" fill="#f0f0f0"/><rect x="9" y="1" width="1" height="1" fill="#111"/><rect x="0" y="3" width="1" height="1" fill="#f0f0f0"/><rect x="0" y="4" width="1" height="1" fill="#111"/><rect x="3" y="3" width="1" height="1" fill="#f0f0f0"/><rect x="3" y="4" width="1" height="1" fill="#111"/><rect x="6" y="3" width="1" height="1" fill="#f0f0f0"/><rect x="6" y="4" width="1" height="1" fill="#111"/><rect x="9" y="3" width="1" height="1" fill="#f0f0f0"/><rect x="9" y="4" width="1" height="1" fill="#111"/></svg>
<svg class="a" style="left:404px;top:228px" width="9" height="9"><polygon points="0.5,0.5 8.5,4.5 0.5,8.5" fill="#2a2a2a"/></svg>
<div class="chk" style="left:417px;top:225px"></div>
<div class="t" style="left:437.5px;top:225.84px;font-size:12px;color:#000;">Motion Blur</div>
<svg class="a" style="left:615px;top:231px" width="11" height="6"><rect x="0" y="0" width="1" height="1" fill="#f0f0f0"/><rect x="0" y="1" width="1" height="1" fill="#111"/><rect x="3" y="0" width="1" height="1" fill="#f0f0f0"/><rect x="3" y="1" width="1" height="1" fill="#111"/><rect x="6" y="0" width="1" height="1" fill="#f0f0f0"/><rect x="6" y="1" width="1" height="1" fill="#111"/><rect x="9" y="0" width="1" height="1" fill="#f0f0f0"/><rect x="9" y="1" width="1" height="1" fill="#111"/><rect x="0" y="3" width="1" height="1" fill="#f0f0f0"/><rect x="0" y="4" width="1" height="1" fill="#111"/><rect x="3" y="3" width="1" height="1" fill="#f0f0f0"/><rect x="3" y="4" width="1" height="1" fill="#111"/><rect x="6" y="3" width="1" height="1" fill="#f0f0f0"/><rect x="6" y="4" width="1" height="1" fill="#111"/><rect x="9" y="3" width="1" height="1" fill="#f0f0f0"/><rect x="9" y="4" width="1" height="1" fill="#111"/></svg>
<svg class="a" style="left:404px;top:252px" width="9" height="9"><polygon points="0.5,0.5 8.5,0.5 4.5,8.5" fill="#2a2a2a"/></svg>
<div class="t" style="left:417.5px;top:249.84px;font-size:12px;color:#000;">Film</div>
<svg class="a" style="left:615px;top:255px" width="11" height="6"><rect x="0" y="0" width="1" height="1" fill="#f0f0f0"/><rect x="0" y="1" width="1" height="1" fill="#111"/><rect x="3" y="0" width="1" height="1" fill="#f0f0f0"/><rect x="3" y="1" width="1" height="1" fill="#111"/><rect x="6" y="0" width="1" height="1" fill="#f0f0f0"/><rect x="6" y="1" width="1" height="1" fill="#111"/><rect x="9" y="0" width="1" height="1" fill="#f0f0f0"/><rect x="9" y="1" width="1" height="1" fill="#111"/><rect x="0" y="3" width="1" height="1" fill="#f0f0f0"/><rect x="0" y="4" width="1" height="1" fill="#111"/><rect x="3" y="3" width="1" height="1" fill="#f0f0f0"/><rect x="3" y="4" width="1" height="1" fill="#111"/><rect x="6" y="3" width="1" height="1" fill="#f0f0f0"/><rect x="6" y="4" width="1" height="1" fill="#111"/><rect x="9" y="3" width="1" height="1" fill="#f0f0f0"/><rect x="9" y="4" width="1" height="1" fill="#111"/></svg>
<svg class="a" style="left:404px;top:334px" width="9" height="9"><polygon points="0.5,0.5 8.5,4.5 0.5,8.5" fill="#2a2a2a"/></svg>
<div class="t" style="left:417.5px;top:331.84px;font-size:12px;color:#000;">Performance</div>
<svg class="a" style="left:615px;top:337px" width="11" height="6"><rect x="0" y="0" width="1" height="1" fill="#f0f0f0"/><rect x="0" y="1" width="1" height="1" fill="#111"/><rect x="3" y="0" width="1" height="1" fill="#f0f0f0"/><rect x="3" y="1" width="1" height="1" fill="#111"/><rect x="6" y="0" width="1" height="1" fill="#f0f0f0"/><rect x="6" y="1" width="1" height="1" fill="#111"/><rect x="9" y="0" width="1" height="1" fill="#f0f0f0"/><rect x="9" y="1" width="1" height="1" fill="#111"/><rect x="0" y="3" width="1" height="1" fill="#f0f0f0"/><rect x="0" y="4" width="1" height="1" fill="#111"/><rect x="3" y="3" width="1" height="1" fill="#f0f0f0"/><rect x="3" y="4" width="1" height="1" fill="#111"/><rect x="6" y="3" width="1" height="1" fill="#f0f0f0"/><rect x="6" y="4" width="1" height="1" fill="#111"/><rect x="9" y="3" width="1" height="1" fill="#f0f0f0"/><rect x="9" y="4" width="1" height="1" fill="#111"/></svg>
<svg class="a" style="left:404px;top:358px" width="9" height="9"><polygon points="0.5,0.5 8.5,4.5 0.5,8.5" fill="#2a2a2a"/></svg>
<div class="t" style="left:417.5px;top:355.84px;font-size:12px;color:#000;">Post Processing</div>
<svg class="a" style="left:615px;top:361px" width="11" height="6"><rect x="0" y="0" width="1" height="1" fill="#f0f0f0"/><rect x="0" y="1" width="1" height="1" fill="#111"/><rect x="3" y="0" width="1" height="1" fill="#f0f0f0"/><rect x="3" y="1" width="1" height="1" fill="#111"/><rect x="6" y="0" width="1" height="1" fill="#f0f0f0"/><rect x="6" y="1" width="1" height="1" fill="#111"/><rect x="9" y="0" width="1" height="1" fill="#f0f0f0"/><rect x="9" y="1" width="1" height="1" fill="#111"/><rect x="0" y="3" width="1" height="1" fill="#f0f0f0"/><rect x="0" y="4" width="1" height="1" fill="#111"/><rect x="3" y="3" width="1" height="1" fill="#f0f0f0"/><rect x="3" y="4" width="1" height="1" fill="#111"/><rect x="6" y="3" width="1" height="1" fill="#f0f0f0"/><rect x="6" y="4" width="1" height="1" fill="#111"/><rect x="9" y="3" width="1" height="1" fill="#f0f0f0"/><rect x="9" y="4" width="1" height="1" fill="#111"/></svg>
<svg class="a" style="left:404px;top:382px" width="9" height="9"><polygon points="0.5,0.5 8.5,0.5 4.5,8.5" fill="#2a2a2a"/></svg>
<div class="t" style="left:417.5px;top:379.84px;font-size:12px;color:#000;">Bake</div>
<svg class="a" style="left:615px;top:385px" width="11" height="6"><rect x="0" y="0" width="1" height="1" fill="#f0f0f0"/><rect x="0" y="1" width="1" height="1" fill="#111"/><rect x="3" y="0" width="1" height="1" fill="#f0f0f0"/><rect x="3" y="1" width="1" height="1" fill="#111"/><rect x="6" y="0" width="1" height="1" fill="#f0f0f0"/><rect x="6" y="1" width="1" height="1" fill="#111"/><rect x="9" y="0" width="1" height="1" fill="#f0f0f0"/><rect x="9" y="1" width="1" height="1" fill="#111"/><rect x="0" y="3" width="1" height="1" fill="#f0f0f0"/><rect x="0" y="4" width="1" height="1" fill="#111"/><rect x="3" y="3" width="1" height="1" fill="#f0f0f0"/><rect x="3" y="4" width="1" height="1" fill="#111"/><rect x="6" y="3" width="1" height="1" fill="#f0f0f0"/><rect x="6" y="4" width="1" height="1" fill="#111"/><rect x="9" y="3" width="1" height="1" fill="#f0f0f0"/><rect x="9" y="4" width="1" height="1" fill="#111"/></svg>
<div class="num" style="left:400px;top:276px;width:110px;height:20px"></div>
<svg class="a" style="left:408px;top:282px" width="5" height="8"><polygon points="4.5,0.5 4.5,7.5 0.5,4" fill="#6a6a6a"/></svg>
<svg class="a" style="left:498px;top:282px" width="5" height="8"><polygon points="0.5,0.5 0.5,7.5 4.5,4" fill="#6a6a6a"/></svg>
<div class="t" style="left:416px;top:281.69px;font-size:11px;color:#000;">Exposure:</div>
<div class="t" style="right:157.60px;top:281.69px;font-size:11px;color:#000;">1.00</div>
<div class="chk" style="left:403px;top:301px"></div>
<div class="t" style="left:425.5px;top:303.69px;font-size:11px;color:#000;">Transparent</div>
<div class="a" style="left:518px;top:276px;width:110px;height:40px;border:1px solid #1e1e1e;border-radius:5px;overflow:hidden;background:linear-gradient(#a9a9a9,#c2c2c2)"><div class="a" style="left:0;top:0;width:108px;height:19px;background:linear-gradient(#505050,#383838);border-bottom:1px solid #1e1e1e"></div></div>
<div class="t" style="left:526.5px;top:281.69px;font-size:11px;color:#fff;">Gaussian</div>
<svg class="a" style="left:618.5px;top:279.5px;overflow:visible" width="5" height="12" viewBox="0 0 5 12"><polygon points="2.5,0 5,5 0,5" fill="#d0d0d0"/><polygon points="0,7 5,7 2.5,12" fill="#d0d0d0"/></svg>
<svg class="a" style="left:526px;top:301px" width="5" height="8"><polygon points="4.5,0.5 4.5,7.5 0.5,4" fill="#6a6a6a"/></svg>
<svg class="a" style="left:615px;top:301px" width="5" height="8"><polygon points="0.5,0.5 0.5,7.5 4.5,4" fill="#6a6a6a"/></svg>
<div class="t" style="left:534px;top:300.69px;font-size:11px;color:#000;">Width:</div>
<div class="t" style="right:39.50px;top:300.69px;font-size:11px;color:#000;">1.50</div>
<div class="btn" style="left:400px;top:406px;width:228px;height:20px"></div>
<svg class="a" style="left:403.5px;top:407.5px;overflow:visible" width="17" height="16" viewBox="0 0 17 16"><rect x="1" y="5" width="13" height="9" rx="1" fill="#e8e8e8" stroke="#111" stroke-width="1"/><rect x="2.2" y="3.2" width="3.5" height="2" fill="#e8e8e8" stroke="#111" stroke-width="0.8"/><circle cx="8" cy="9.6" r="3.2" fill="#3a2a30" stroke="#111" stroke-width="0.7"/><circle cx="8.3" cy="9.2" r="1.1" fill="#a07a90"/><rect x="2" y="7.5" width="2.4" height="4.5" fill="#3a3a3a"/><path d="M13.5 0.5 L14.2 3 L16.5 3.5 L14.2 4 L13.5 6.5 L12.8 4 L10.5 3.5 L12.8 3Z" fill="#fff8a0"/></svg>
<div class="t" style="left:509.5px;top:411.69px;font-size:11px;color:#000;">Bake</div>
<div class="t" style="left:408.5px;top:436.69px;font-size:11px;color:#000;">Bake Type:</div>
<div class="menu" style="left:480px;top:431px;width:148px;height:20px"></div>
<div class="t" style="left:488px;top:436.69px;font-size:11px;color:#fff;">Normal</div>
<svg class="a" style="left:619.0px;top:435.0px;overflow:visible" width="5" height="12" viewBox="0 0 5 12"><polygon points="2.5,0 5,5 0,5" fill="#d0d0d0"/><polygon points="0,7 5,7 2.5,12" fill="#d0d0d0"/></svg>
<div class="num" style="left:400px;top:465px;width:110px;height:19px"></div>
<svg class="a" style="left:408px;top:470.5px" width="5" height="8"><polygon points="4.5,0.5 4.5,7.5 0.5,4" fill="#6a6a6a"/></svg>
<svg class="a" style="left:498px;top:470.5px" width="5" height="8"><polygon points="0.5,0.5 0.5,7.5 4.5,4" fill="#6a6a6a"/></svg>
<div class="t" style="left:416px;top:470.69px;font-size:11px;color:#000;">Margin:</div>
<div class="t" style="right:156.80px;top:470.69px;font-size:11px;color:#000;">8 px</div>
<div class="chk" style="left:521.5px;top:467.5px"></div>
<div class="t" style="left:543.5px;top:469.69px;font-size:11px;color:#fff;">Selected to A...</div>
<svg class="a" style="left:521.5px;top:467.5px;overflow:visible" width="15" height="15" viewBox="0 0 15 15"><path d="M3.6 5.6 L6.8 8.2 L13.2 0.8" stroke="#d4d4d4" stroke-width="2" fill="none" stroke-linecap="round" stroke-linejoin="round"/></svg>
<div class="chk" style="left:403px;top:489.5px"></div>
<div class="t" style="left:425.5px;top:491.69px;font-size:11px;color:#fff;">Clear</div>
<svg class="a" style="left:403px;top:489.5px;overflow:visible" width="15" height="15" viewBox="0 0 15 15"><path d="M3.6 5.6 L6.8 8.2 L13.2 0.8" stroke="#d4d4d4" stroke-width="2" fill="none" stroke-linecap="round" stroke-linejoin="round"/></svg>
<div class="chk" style="left:521.5px;top:489px"></div>
<div class="t" style="left:543.5px;top:491.69px;font-size:11px;color:#fff;">Cage</div>
<svg class="a" style="left:521.5px;top:489px;overflow:visible" width="15" height="15" viewBox="0 0 15 15"><path d="M3.6 5.6 L6.8 8.2 L13.2 0.8" stroke="#d4d4d4" stroke-width="2" fill="none" stroke-linecap="round" stroke-linejoin="round"/></svg>
<div class="num" style="left:518px;top:509px;width:110px;height:19px"></div>
<svg class="a" style="left:526px;top:514px" width="5" height="8"><polygon points="4.5,0.5 4.5,7.5 0.5,4" fill="#6a6a6a"/></svg>
<svg class="a" style="left:615px;top:514px" width="5" height="8"><polygon points="0.5,0.5 0.5,7.5 4.5,4" fill="#6a6a6a"/></svg>
<div class="t" style="left:534px;top:514.19px;font-size:11px;color:#000;">Extrusio:</div>
<div class="t" style="right:37.80px;top:514.19px;font-size:11px;color:#000;">0.600</div>
<div class="a" style="left:518px;top:530.5px;width:110px;height:19.5px;border:1px solid #2a2a2a;border-radius:4px;background:linear-gradient(#9c9c9c,#939393)"></div>
<svg class="a" style="left:523.5px;top:533.5px;overflow:visible" width="14" height="14" viewBox="0 0 14 14"><polygon points="7,0.8 13,3.8 13,10.2 7,13.2 1,10.2 1,3.8" fill="#c8925a" stroke="#3a2a10" stroke-width="0.9"/><polygon points="7,0.8 13,3.8 7,6.8 1,3.8" fill="#f0c890"/><polygon points="7,6.8 13,3.8 13,10.2 7,13.2" fill="#a86a30"/></svg>
<svg class="a" style="left:612px;top:534px;overflow:visible" width="13" height="12" viewBox="0 0 13 12"><path d="M2 1.5L11 10.5M11 1.5L2 10.5" stroke="#1a1a1a" stroke-width="3.6" stroke-linecap="round"/><path d="M2 1.5L11 10.5M11 1.5L2 10.5" stroke="#f4f4f4" stroke-width="1.8" stroke-linecap="round"/></svg>
<div class="t" style="left:542.5px;top:535.69px;font-size:11px;color:#000;">Cube-Cage</div>
<div class="a" style="left:400px;top:566px;width:228px;height:100px;border:1px solid #3a3a3a;border-radius:4px;background:#7a7a7a"></div>
<div class="t" style="left:413.5px;top:579.69px;font-size:11px;color:#000;">Normal Settings:</div>
<div class="t" style="left:413.5px;top:607.69px;font-size:11px;color:#000;">Space:</div>
<div class="menu" style="left:482px;top:602px;width:141px;height:20px"></div>
<div class="t" style="left:491px;top:607.69px;font-size:11px;color:#fff;">Tangent</div>
<svg class="a" style="left:613.5px;top:606.0px;overflow:visible" width="5" height="12" viewBox="0 0 5 12"><polygon points="2.5,0 5,5 0,5" fill="#d0d0d0"/><polygon points="0,7 5,7 2.5,12" fill="#d0d0d0"/></svg>
<div class="t" style="left:413.5px;top:635.69px;font-size:11px;color:#000;">Swizzle:</div>
<div class="menu" style="left:459px;top:630px;width:164px;height:20px"></div>
<div class="a" style="left:512px;top:631px;width:1px;height:18px;background:#1a1a1a"></div>
<div class="a" style="left:566px;top:631px;width:1px;height:18px;background:#1a1a1a"></div>
<div class="t" style="left:467.5px;top:635.69px;font-size:11px;color:#fff;">+X</div>
<svg class="a" style="left:504.0px;top:634.0px;overflow:visible" width="5" height="12" viewBox="0 0 5 12"><polygon points="2.5,0 5,5 0,5" fill="#d0d0d0"/><polygon points="0,7 5,7 2.5,12" fill="#d0d0d0"/></svg>
<div class="t" style="left:520.5px;top:635.69px;font-size:11px;color:#fff;">+Y</div>
<svg class="a" style="left:557.5px;top:634.0px;overflow:visible" width="5" height="12" viewBox="0 0 5 12"><polygon points="2.5,0 5,5 0,5" fill="#d0d0d0"/><polygon points="0,7 5,7 2.5,12" fill="#d0d0d0"/></svg>
<div class="t" style="left:575px;top:635.69px;font-size:11px;color:#fff;">+Z</div>
<svg class="a" style="left:613.5px;top:634.0px;overflow:visible" width="5" height="12" viewBox="0 0 5 12"><polygon points="2.5,0 5,5 0,5" fill="#d0d0d0"/><polygon points="0,7 5,7 2.5,12" fill="#d0d0d0"/></svg>
<div class="a" style="left:636px;top:206px;width:13px;height:460px;border-radius:6px;background:#5e5e5e"></div>
<div class="a" style="left:636.5px;top:476.5px;width:12px;height:200px;border-radius:6px;border:1px solid #4e4e4e;background:linear-gradient(90deg,#939393,#7c7c7c)"></div>
<div class="a" style="left:0;top:0;width:390px;height:652px;overflow:hidden"><div class="t" style="right:621.50px;top:590.69px;font-size:11px;color:#fff;">Cube-LR</div>
<div class="a" style="left:0;top:610px;width:391px;height:25px;background:#727272;border-top:1px solid #6a6a6a"></div>
<div class="a" style="left:0;top:635px;width:391px;height:2px;background:#161616"></div>
<div class="a" style="left:0;top:637px;width:391px;height:15px;background:#727272;border-top:1px solid #7a7a7a"></div>
<div class="menu" style="left:-10px;top:613px;width:32px;height:20px"></div>
<svg class="a" style="left:0;top:615px" width="8" height="16"><circle cx="0" cy="8" r="6" fill="#e8e8e8"/></svg>
<svg class="a" style="left:13.0px;top:617.0px;overflow:visible" width="5" height="12" viewBox="0 0 5 12"><polygon points="2.5,0 5,5 0,5" fill="#e0e0e0"/><polygon points="0,7 5,7 2.5,12" fill="#e0e0e0"/></svg>
<div class="a" style="left:27px;top:613px;width:55px;height:20px;border:1px solid #1a1a1a;border-radius:4px;overflow:hidden;background:linear-gradient(#4e4e4e,#3a3a3a)"><div class="a" style="left:33px;top:0;width:20px;height:18px;background:linear-gradient(#adadad,#979797);border-left:1px solid #1a1a1a"></div></div>
<svg class="a" style="left:31px;top:615px" width="16" height="16"><circle cx="5" cy="5" r="4.3" fill="#e6e6e6"/><circle cx="10" cy="10" r="4.3" fill="#f2f2f2"/><rect x="5.5" y="5.5" width="4" height="4" fill="#3a70c0" stroke="#cfe0ff" stroke-width="0.8"/></svg>
<svg class="a" style="left:53.0px;top:617.0px;overflow:visible" width="5" height="12" viewBox="0 0 5 12"><polygon points="2.5,0 5,5 0,5" fill="#e0e0e0"/><polygon points="0,7 5,7 2.5,12" fill="#e0e0e0"/></svg>
<svg class="a" style="left:63px;top:615px" width="18" height="16"><circle cx="4" cy="3" r="1.6" fill="none" stroke="#2a5ab0" stroke-width="1"/><circle cx="9" cy="3" r="1.6" fill="none" stroke="#2a5ab0" stroke-width="1"/><circle cx="14" cy="3" r="1.6" fill="none" stroke="#2a5ab0" stroke-width="1"/><path d="M3 10.5h12M6 7l-3.5 3.5 3.5 3.5M12 7l3.5 3.5-3.5 3.5" stroke="#111" stroke-width="3" fill="none" stroke-linecap="round" stroke-linejoin="round"/><path d="M3 10.5h12M6 7l-3.5 3.5 3.5 3.5M12 7l3.5 3.5-3.5 3.5" stroke="#fff" stroke-width="1.3" fill="none" stroke-linecap="round" stroke-linejoin="round"/></svg>
<div class="a" style="left:87px;top:613px;width:151px;height:20px;border:1px solid #1a1a1a;border-radius:4px;overflow:hidden;background:linear-gradient(#4e4e4e,#3a3a3a)"><div class="a" style="left:19px;top:0;width:20px;height:18px;background:linear-gradient(#6b8fd0,#5078be)"></div><div class="a" style="left:18px;top:0;width:1px;height:18px;background:#1a1a1a"></div><div class="a" style="left:38px;top:0;width:1px;height:18px;background:#1a1a1a"></div><div class="a" style="left:58px;top:0;width:1px;height:18px;background:#1a1a1a"></div><div class="a" style="left:78px;top:0;width:1px;height:18px;background:#1a1a1a"></div></div>
<svg class="a" style="left:89px;top:615px" width="18" height="17"><path d="M8.5 9.5V2" stroke="#8ab4ff" stroke-width="2"/><path d="M8.5 9.5L2.5 13.5" stroke="#ff5a3a" stroke-width="2"/><path d="M8.5 9.5L14.5 13.5" stroke="#6ad040" stroke-width="2"/></svg>
<svg class="a" style="left:108px;top:615px" width="18" height="17"><path d="M3 14L13 4" stroke="#10205a" stroke-width="3"/><path d="M3 14L13 4" stroke="#cfe4ff" stroke-width="1.5"/><polygon points="15,2 7.5,4 13,9.5" fill="#cfe4ff" stroke="#10205a" stroke-width="0.8"/></svg>
<svg class="a" style="left:128px;top:615px" width="18" height="17"><path d="M4 15C4 9 8 4 15 4" stroke="#6c86b0" stroke-width="2.5" fill="none"/></svg>
<svg class="a" style="left:148px;top:615px" width="18" height="17"><path d="M3 14L10 7" stroke="#6c86b0" stroke-width="2"/><rect x="9" y="2" width="6" height="6" fill="#7c96c0"/></svg>
<div class="t" style="left:174.5px;top:618.69px;font-size:11px;color:#fff;">Global</div>
<svg class="a" style="left:229.5px;top:617.0px;overflow:visible" width="5" height="12" viewBox="0 0 5 12"><polygon points="2.5,0 5,5 0,5" fill="#e0e0e0"/><polygon points="0,7 5,7 2.5,12" fill="#e0e0e0"/></svg>
<div class="a" style="left:244px;top:613px;width:50px;height:20px;border:1px solid #222;border-radius:4px;overflow:hidden;background:#8a8a8a"><div class="a" style="left:9px;top:0;width:1px;height:18px;background:#4a4a4a"></div><div class="a" style="left:19px;top:0;width:1px;height:18px;background:#4a4a4a"></div><div class="a" style="left:29px;top:0;width:1px;height:18px;background:#4a4a4a"></div><div class="a" style="left:39px;top:0;width:1px;height:18px;background:#4a4a4a"></div><div class="a" style="left:0;top:9px;width:48px;height:1px;background:#4a4a4a"></div></div>
<svg class="a" style="left:245.5px;top:614px" width="8" height="8"><circle cx="4" cy="4" r="2.5" fill="#f0a050" stroke="#2a2a2a" stroke-width="1"/></svg>
<svg class="a" style="left:255.5px;top:614px" width="8" height="8"><circle cx="4" cy="4" r="2.5" fill="#5a5a5a" stroke="#2a2a2a" stroke-width="1"/></svg>
<svg class="a" style="left:265.5px;top:614px" width="8" height="8"><circle cx="4" cy="4" r="2.5" fill="#5a5a5a" stroke="#2a2a2a" stroke-width="1"/></svg>
<svg class="a" style="left:245.5px;top:624px" width="8" height="8"><circle cx="4" cy="4" r="2.5" fill="#8a8a8a" stroke="#2a2a2a" stroke-width="1"/></svg>
<div class="a" style="left:299px;top:613px;width:50px;height:20px;border:1px solid #222;border-radius:4px;overflow:hidden;background:#8a8a8a"><div class="a" style="left:9px;top:0;width:1px;height:18px;background:#4a4a4a"></div><div class="a" style="left:19px;top:0;width:1px;height:18px;background:#4a4a4a"></div><div class="a" style="left:29px;top:0;width:1px;height:18px;background:#4a4a4a"></div><div class="a" style="left:39px;top:0;width:1px;height:18px;background:#4a4a4a"></div><div class="a" style="left:0;top:9px;width:48px;height:1px;background:#4a4a4a"></div></div>
<svg class="a" style="left:338.5px;top:624px" width="8" height="8"><circle cx="4" cy="4" r="2.5" fill="#8a8a8a" stroke="#2a2a2a" stroke-width="1"/></svg>
<div class="a" style="left:354.5px;top:613.5px;width:19px;height:19px;border:1px solid #222;border-radius:4px;background:linear-gradient(#505050,#444)"></div>
<svg class="a" style="left:356px;top:615px;overflow:visible" width="17" height="17" viewBox="0 0 17 17"><defs><linearGradient id="lg1" x1="0" y1="0" x2="1" y2="1"><stop offset="0" stop-color="#e0e0e0"/><stop offset="1" stop-color="#9a9a9a"/></linearGradient></defs><rect x="1" y="1.5" width="10" height="11" fill="url(#lg1)" stroke="#222" stroke-width="0.9"/><path d="M2.5 11h6" stroke="#333" stroke-width="0.8"/><g fill="none" stroke="#1a1a1a" stroke-width="2.6"><rect x="10.5" y="4" width="4.5" height="6" rx="2.2"/><rect x="10.5" y="9" width="4.5" height="6" rx="2.2"/></g><g fill="none" stroke="#f0f0f0" stroke-width="1.2"><rect x="10.5" y="4" width="4.5" height="6" rx="2.2"/><rect x="10.5" y="9" width="4.5" height="6" rx="2.2"/></g></svg>
<div class="a" style="left:379.5px;top:613.5px;width:20px;height:19px;border:1px solid #2a2a2a;border-radius:4px;background:linear-gradient(#949494,#848484)"></div>
<svg class="a" style="left:382px;top:616px;overflow:visible" width="10" height="14" viewBox="0 0 10 14"><circle cx="6.7" cy="6.5" r="5" fill="none" stroke="#a8a8a8" stroke-width="1.2"/><circle cx="6.7" cy="6.5" r="2" fill="#a0a0a0"/></svg>
<div class="a" style="left:-5px;top:640px;width:72px;height:20px;border:1px solid #222;border-radius:4px;overflow:hidden;background:linear-gradient(#a9a9a9,#939393)"><div class="a" style="left:11px;top:0;width:1px;height:20px;background:#333"></div><div class="a" style="left:31px;top:0;width:1px;height:20px;background:#333"></div><div class="a" style="left:51px;top:0;width:1px;height:20px;background:#333"></div></div>
<svg class="a" style="left:0px;top:640px;overflow:visible" width="68" height="12" viewBox="0 0 68 12"><g fill="#f4f4f4" stroke="#1a1a1a" stroke-width="0.9" stroke-linejoin="round"><rect x="0" y="4" width="2" height="10"/><polygon points="11.5,3.5 11.5,16.5 23,10"/><polygon points="31,5 31,15 37,10"/><polygon points="37,5 37,15 43,10"/><polygon points="50.5,5 50.5,15 56.5,10"/><polygon points="56.5,5 56.5,15 62.5,10"/><rect x="62.5" y="5" width="2" height="10"/></g></svg>
<div class="menu" style="left:74px;top:640px;width:114px;height:20px"></div>
<div class="t" style="left:81.5px;top:646.69px;font-size:11px;color:#fff;">No Sync</div>
<svg class="a" style="left:178.5px;top:644.0px;overflow:visible" width="5" height="12" viewBox="0 0 5 12"><polygon points="2.5,0 5,5 0,5" fill="#e0e0e0"/><polygon points="0,7 5,7 2.5,12" fill="#e0e0e0"/></svg>
<div class="btn" style="left:204.5px;top:640px;width:19px;height:20px"></div>
<svg class="a" style="left:207px;top:643px" width="14" height="9"><circle cx="7" cy="9" r="5" fill="#e33a0a" stroke="#5a1a00" stroke-width="0.8"/></svg>
<div class="btn" style="left:229px;top:640px;width:131px;height:20px;border-radius:4px 0 0 4px"></div>
<svg class="a" style="left:232px;top:641px" width="18" height="11"><path d="M6 1v10" stroke="#fff2a0" stroke-width="2"/><path d="M6 2h3v3" stroke="#fff2a0" stroke-width="1.5" fill="none"/><path d="M7 11L15 5" stroke="#fff" stroke-width="2.5"/></svg>
<div class="btn" style="left:359px;top:640px;width:21px;height:20px;border-radius:0 4px 4px 0"></div>
<svg class="a" style="left:362px;top:642px" width="16" height="10"><path d="M2 10L12 3" stroke="#fff" stroke-width="2.5"/><circle cx="12" cy="3" r="2.5" fill="#fff"/></svg>
<svg class="a" style="left:379px;top:636px" width="12" height="16"><g stroke="#c04040" stroke-width="1"><line x1="0" y1="1" x2="12" y2="13"/><line x1="4" y1="1" x2="12" y2="9"/><line x1="8" y1="1" x2="12" y2="5"/></g></svg></div>
</body></html>
